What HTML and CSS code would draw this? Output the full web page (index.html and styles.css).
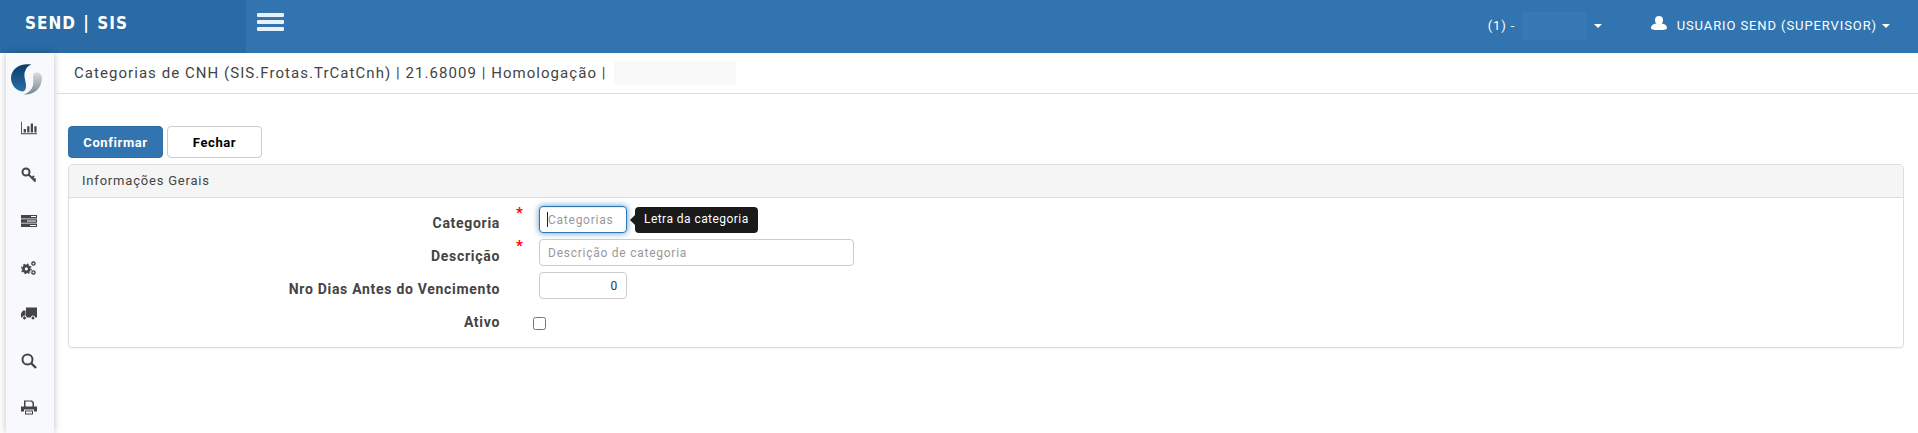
FILE: index.html
```html
<!DOCTYPE html>
<html lang="pt-BR">
<head>
  <meta charset="UTF-8">
  <title>Categorias de CNH</title>
  <link rel="stylesheet" href="styles.css">
</head>
<body>
  <header class="topbar">
    <div class="brand">SEND | SIS</div>
    <button class="menuToggle" type="button"><span></span><span></span><span></span></button>
    <div class="topbarRight">
      <div class="company">(1) - <span class="blurBox"></span><span class="caret"></span></div>
      <div class="userBox">
        <svg class="userIcon" viewBox="0 0 16 14"><ellipse cx="8" cy="4.2" rx="4" ry="4.2" fill="#fff"/><path d="M0 12c0-3 3-4 5-4.5 1.5 1 4.500 1 6 0 2 .5 5 1.500 5 4.500 0 1.500-2 2-8 2s-8-.5-8-2z" fill="#fff"/></svg>
        USUARIO SEND (SUPERVISOR)<span class="caret"></span>
      </div>
    </div>
  </header>
  <div class="layout">
    <nav class="sidebar">
      <svg class="logo" viewBox="0 0 32 32">
        <defs>
          <linearGradient id="logoBlue" x1="0" y1="0" x2="0" y2="1"><stop offset="0" stop-color="#0b3a66"/><stop offset="1" stop-color="#2a70ac"/></linearGradient>
          <linearGradient id="logoGray" x1="0" y1="0" x2="0" y2="1"><stop offset="0" stop-color="#d8dde0"/><stop offset="1" stop-color="#74868f"/></linearGradient>
        </defs>
        <path d="M21 1C9 -1 0 6 0 15c0 7 5 13 12 14 4-1 4-6 3-10-1-5-2-8 0-12 1-3 3-5 6-6z" fill="url(#logoBlue)"/>
        <path d="M32 15c0 10-8 18-19 17 6-2 10-6 10-13 0-3-1-7 1-9 3-2 8 0 8 5z" fill="url(#logoGray)"/>
      </svg>
      <a class="navIcon"><svg viewBox="0 0 18 14"><path d="M0 0h1v13h17v1H0z M3 8h2.500v4H3z M7 5h2.500v7H7z M11 2h2.500v10H11z M15 5h2.500v7H15z" fill="#444"/></svg></a>
      <a class="navIcon"><svg viewBox="0 0 16 16"><circle cx="5" cy="5" r="3.500" fill="none" stroke="#444" stroke-width="2"/><path d="M7.500 7.500l7 7M11 11l2-2M13 13l1.500-1.500" fill="none" stroke="#444" stroke-width="1.800"/></svg></a>
      <a class="navIcon"><svg viewBox="0 0 16 12"><path d="M0 0h16v3.500H0z M0 4.300h16v3.500H0z M0 8.500h16v3.500H0z" fill="#444"/><path d="M10 1h5v1h-5z M6 5.500h9v1H6z M9 10h6v1H9z" fill="#fff"/></svg></a>
      <a class="navIcon"><svg viewBox="0 0 18 16"><circle cx="6" cy="9" r="3.300" fill="none" stroke="#444" stroke-width="3"/><circle cx="6" cy="9" r="5.400" fill="none" stroke="#444" stroke-width="1.400" stroke-dasharray="2 2.240"/><circle cx="14" cy="3" r="1.800" fill="none" stroke="#444" stroke-width="1.600"/><circle cx="14" cy="13" r="1.800" fill="none" stroke="#444" stroke-width="1.600"/></svg></a>
      <a class="navIcon"><svg viewBox="0 0 16 13"><path d="M5 0h11v10H5z M0 6l2-3h2.500v7H0z" fill="#444"/><circle cx="3.500" cy="10.500" r="2" fill="#444" stroke="#f8f9fc"/><circle cx="12" cy="10.500" r="2" fill="#444" stroke="#f8f9fc"/></svg></a>
      <a class="navIcon"><svg viewBox="0 0 16 16"><circle cx="6.500" cy="6.500" r="5" fill="none" stroke="#444" stroke-width="2"/><path d="M10 10l5 5" stroke="#444" stroke-width="2.400"/></svg></a>
      <a class="navIcon"><svg viewBox="0 0 16 15"><path d="M3 7V1h8l2 2v4h-1.500V3.500L10 2H4.500v5z M0 7h16v5h-3v-2H3v2H0z M4 11h8v4H4z" fill="#444"/><path d="M5 12h6v2H5z" fill="#f8f9fc"/></svg></a>
    </nav>
    <main class="content">
      <div class="pageTitle">Categorias de CNH (SIS.Frotas.TrCatCnh) | 21.68009 | Homologação | <span class="blurTitle"></span></div>
      <div class="pageBody">
        <div class="actions">
          <button class="btn btnPrimary" type="button">Confirmar</button>
          <button class="btn btnDefault" type="button">Fechar</button>
        </div>
        <section class="panel">
          <div class="panelHeading">Informações Gerais</div>
          <form class="panelBody">
            <label class="fieldLabel">Categoria</label>
            <span class="required">*</span>
            <div class="fieldCell">
              <input class="input inputFocus inputShort" type="text" placeholder="Categorias">
              <span class="textCursor"></span>
              <div class="tooltip">Letra da categoria</div>
            </div>
            <label class="fieldLabel">Descrição</label>
            <span class="required">*</span>
            <div class="fieldCell"><input class="input inputLong" type="text" placeholder="Descrição de categoria"></div>
            <label class="fieldLabel">Nro Dias Antes do Vencimento</label>
            <span></span>
            <div class="fieldCell"><input class="input inputShort inputNumber" type="text" value="0"></div>
            <label class="fieldLabel">Ativo</label>
            <span></span>
            <div class="fieldCell"><input class="check" type="checkbox"></div>
          </form>
        </section>
      </div>
    </main>
  </div>
</body>
</html>
```

FILE: styles.css
```css
* { box-sizing: border-box; }
html, body { height: 100%; }
body { margin: 0; background-color: white; color: #333; font-family: Roboto, sans-serif; font-size: 13px; overflow: hidden; display: flex; flex-direction: column; }

.topbar { display: flex; align-items: stretch; flex: 0 0 53px; background-color: #3174af; color: white; }
.brand { width: 246px; padding: 13px 0 0 25px; background-color: #2a6aa5; font-family: "DejaVu Sans Condensed", "DejaVu Sans", sans-serif; font-size: 17px; font-weight: bold; letter-spacing: 1px; word-spacing: 1px; }
.menuToggle { display: flex; flex-direction: column; gap: 3px; width: 27px; height: 18px; margin: 13px 0 0 11px; padding: 0; border: none; background: none; }
.menuToggle span { display: block; height: 4px; width: 27px; background-color: #e9f0f6; border-radius: 1px; }
.topbarRight { display: flex; margin-left: auto; padding: 14px 28px 0 0; font-size: 13px; letter-spacing: .9px; }
.company { display: flex; align-items: flex-start; line-height: 23px; width: 114px; margin-right: 49px; white-space: pre; }
.blurBox { width: 70px; height: 28px; margin: -2px 3px 0 3px; background-color: #3779b3; }
.userBox { display: flex; align-items: flex-start; line-height: 23px; }
.userIcon { width: 16px; height: 14px; margin: 2px 10px 0 0; }
.caret { display: inline-block; width: 0; height: 0; margin: 10px 0 0 5px; border-top: 4px solid white; border-left: 4px solid transparent; border-right: 4px solid transparent; }
.userBox .caret { margin-left: 5px; }

.layout { display: flex; flex: 1; min-height: 0; }
.sidebar { display: flex; flex-direction: column; align-items: center; width: 48px; margin-left: 6px; padding-top: 10px; background-color: #f8f9fc; box-shadow: 0 0 7px rgba(0, 0, 0, .25); }
.logo { width: 31px; height: 32px; margin: 0 7px 10px 0; flex: none; }
.navIcon { display: flex; align-items: center; justify-content: center; width: 100%; flex: 0 0 46.500px; padding-right: 2px; }
.navIcon svg { width: 16px; height: 16px; }

.content { flex: 1; min-width: 0; }
.pageTitle { display: flex; align-items: center; height: 41px; padding-left: 20px; border-bottom: 1px solid #ddd; color: #444; font-size: 15px; letter-spacing: 1.050px; white-space: pre; }
.blurTitle { width: 122px; height: 24px; margin-left: 3px; background-color: #f9f9f9; }
.pageBody { padding: 32px 14px 0 14px; }
.actions { display: flex; gap: 4px; margin-bottom: 6px; }
.btn { width: 95px; height: 32px; padding: 0; border-radius: 4px; font-family: Roboto, sans-serif; font-size: 13px; font-weight: bold; letter-spacing: .6px; }
.btnPrimary { border: 1px solid #2e6da4; background-color: #3174af; color: white; }
.btnDefault { border: 1px solid #ccc; background-color: white; color: #000; }

.panel { border: 1px solid #ddd; border-radius: 4px; box-shadow: 0 1px 1px rgba(0, 0, 0, .05); }
.panelHeading { height: 33px; padding: 0 13px; border-bottom: 1px solid #ddd; background-color: #f5f5f5; color: #444; font-size: 13px; letter-spacing: .8px; line-height: 31px; }
.panelBody { display: grid; grid-template-columns: 431px 39px 1fr; grid-auto-rows: 33px; padding: 8px 0 0; height: 149px; }
.fieldLabel { padding-top: 9px; text-align: right; color: #444; font-weight: bold; font-size: 14px; letter-spacing: .7px; }
.required { padding: 0 0 0 16px; color: red; font-size: 15px; font-weight: bold; line-height: 14px; }
.fieldCell { position: relative; }
.input { height: 27px; padding: 0 8px; border: 1px solid #ccc; border-radius: 4px; color: #333; font-family: Roboto, sans-serif; font-size: 12px; letter-spacing: .75px; outline: none; }
.input::placeholder { color: #999; }
.inputShort { width: 88px; }
.inputLong { width: 315px; }
.inputNumber { text-align: right; }
.inputFocus { border-color: #2e78b8; box-shadow: inset 0 1px 1px rgba(0, 0, 0, .075), 0 0 6px rgba(46, 120, 184, .8); }
.textCursor { position: absolute; left: 8px; top: 6px; width: 1px; height: 15px; background-color: #222; }
.check { width: 13px; height: 13px; margin: 12px 0 0 -6px; }
.tooltip { position: absolute; top: 1px; left: 96px; padding: 0 9px; height: 26px; background-color: #1a1a1a; color: white; border-radius: 4px; font-size: 12px; letter-spacing: .45px; line-height: 25px; white-space: nowrap; }
.tooltip::before { content: ""; position: absolute; left: -5px; top: 8px; border-top: 5px solid transparent; border-bottom: 5px solid transparent; border-right: 5px solid #1a1a1a; }
```
